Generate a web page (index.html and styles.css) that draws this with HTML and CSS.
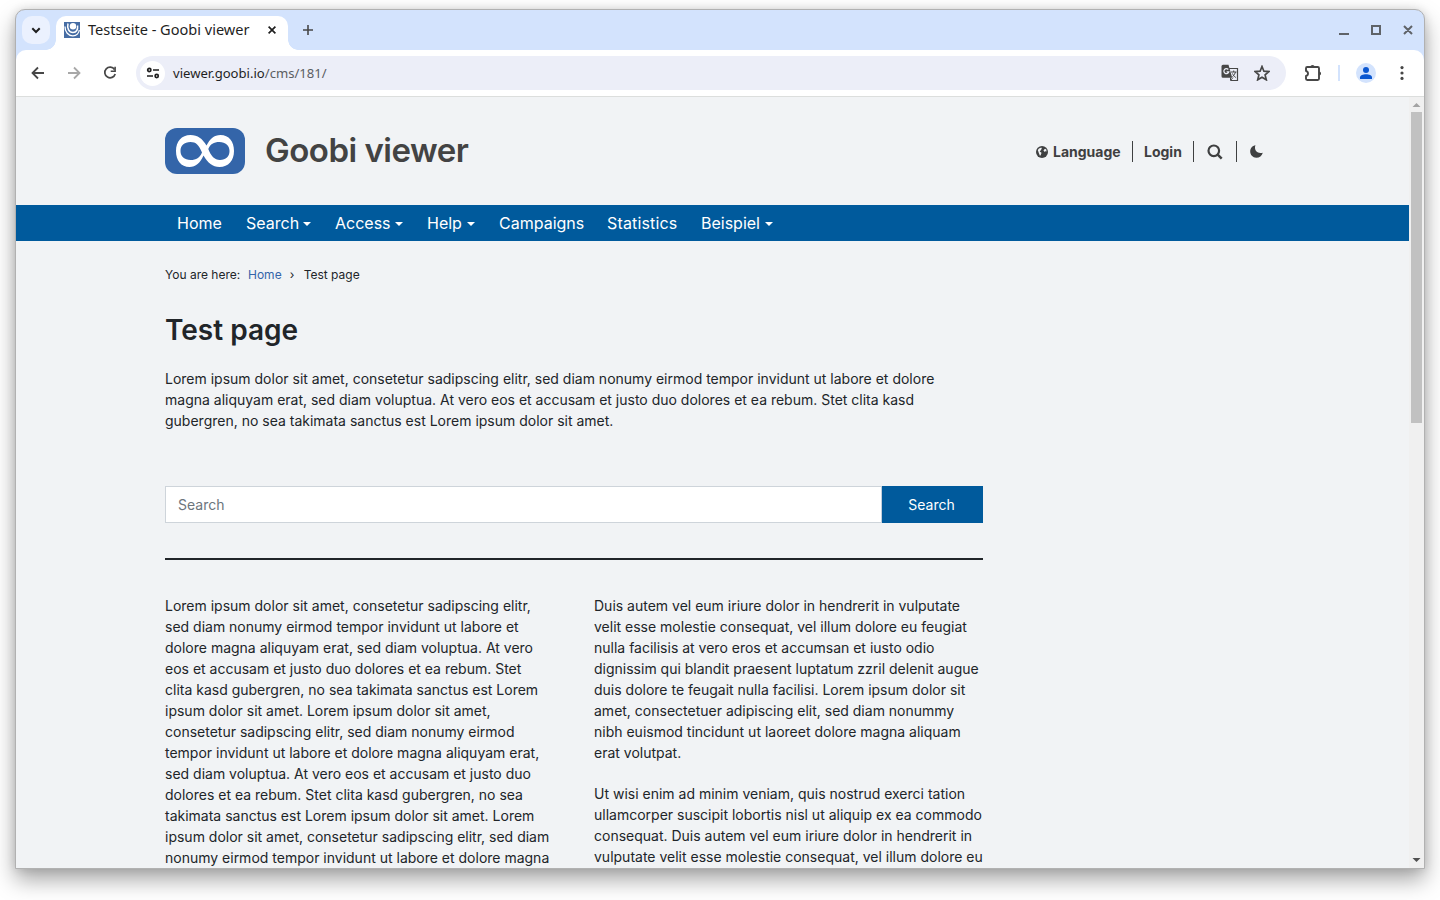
FILE: index.html
```html
<!DOCTYPE html>
<html lang="en">
<head>
<meta charset="utf-8">
<title>Testseite - Goobi viewer</title>
<link rel="stylesheet" href="styles.css">
</head>
<body>
<div class="window">
  <div class="tabstrip">
    <div class="tab-search"><svg width="28" height="28" viewBox="0 0 28 28"><path d="M10.300 12.300l3.700 3.700 3.700-3.700" fill="none" stroke="#1f1f1f" stroke-width="2"/></svg></div>
    <div class="tab">
      <svg class="favicon" width="16" height="16" viewBox="0 0 16 16"><rect width="16" height="16" fill="#466da4"/><circle cx="9" cy="4.300" r="3.200" fill="#fff"/><path d="M4 1.500C2.800 6.500 5 10.500 9 10.500C12.500 10.500 14 7.500 13.600 3.500" fill="none" stroke="#fff" stroke-width="1.500"/><path d="M1 4.500C.8 10 4.500 14 9 13.800C12.500 13.600 15 11 15.300 8" fill="none" stroke="#fff" stroke-width="1.300"/></svg>
      <span class="tab-title">Testseite - Goobi viewer</span>
      <svg class="tab-close" width="8" height="8" viewBox="0 0 8 8"><path d="M.6.6l6.800 6.800M7.400.6L.6 7.400" stroke="#1f1f1f" stroke-width="1.700"/></svg>
    </div>
    <svg class="new-tab" width="12" height="12" viewBox="0 0 12 12"><path d="M6 1v10M1 6h10" stroke="#474747" stroke-width="1.600"/></svg>
    <svg class="win-controls" width="80" height="20" viewBox="0 0 80 20"><g fill="none" stroke="#5f6368" stroke-width="2"><path d="M3 14h10M36 6h8v8h-8zM68 6l8 8M76 6l-8 8"/></g></svg>
  </div>
  <div class="toolbar">
    <div class="nav-icons">
      <svg width="16" height="16" viewBox="0 0 16 16"><path d="M14 8H3M8 2.500L2.500 8 8 13.500" fill="none" stroke="#474747" stroke-width="1.800"/></svg>
      <svg width="16" height="16" viewBox="0 0 16 16"><path d="M2 8h11M8 2.500L13.500 8 8 13.500" fill="none" stroke="#a8a8a8" stroke-width="1.800"/></svg>
      <svg width="16" height="16" viewBox="0 0 16 16"><path d="M12.500 4.500A5.300 5.300 0 1 0 13.200 9" fill="none" stroke="#474747" stroke-width="1.700"/><path d="M13.900 1.800v5.200H8.700V5.400h3.600V1.800z" fill="#474747"/></svg>
    </div>
    <div class="omnibox">
      <div class="site-info"><svg width="14" height="14" viewBox="0 0 14 14"><g fill="none" stroke="#1f1f1f" stroke-width="1.700"><circle cx="3.300" cy="4" r="1.600"/><path d="M7 4h6M1 10h6"/><circle cx="10.700" cy="10" r="1.600"/></g></svg></div>
      <span class="url">viewer.goobi.io<span class="path">/cms/181/</span></span>
      <svg class="translate" width="18" height="18" viewBox="0 0 18 18"><path d="M8 4.500h8.500v12H10" fill="none" stroke="#474747" stroke-width="1.200"/><path d="M2 .8h5.500l3.700 13H2A1.500 1.500 0 0 1 .5 12.300v-10A1.500 1.500 0 0 1 2 .8z" fill="#474747"/><path d="M7.300 5.500A2.500 2.500 0 1 0 7.800 7.800H5.600" fill="none" stroke="#eceef8" stroke-width="1.200"/><path d="M10 8h5.500M12.700 6.500V8M14.500 8c-.5 2-1.500 3.500-3 4.700M11.500 9.500c.8 1.800 1.700 3 3.300 4M9.500 13.500v3l2.500-3" fill="none" stroke="#474747"/></svg>
      <svg class="star" width="16" height="16" viewBox="0 0 16 16"><path d="M8 1.500l1.900 4.700 5 .4-3.800 3.300 1.200 4.900L8 12.200l-4.300 2.600 1.200-4.900L1.100 6.600l5-.4z" fill="none" stroke="#474747" stroke-width="1.700"/></svg>
    </div>
    <svg class="puzzle" width="18" height="18" viewBox="0 0 18 18"><path d="M2 4.200q0-1.200 1.200-1.200h10.600Q15 3 15 4.200v10.600Q15 16 13.800 16H3.200Q2 16 2 14.800V12q2-.4 2-2.500T2 7z" fill="none" stroke="#474747" stroke-width="1.900" stroke-linejoin="round"/><path d="M6.400 3a2.100 2.100 0 0 1 4.200 0zM15 7.400a2.100 2.100 0 0 1 0 4.200z" fill="#474747"/></svg>
    <div class="divider"></div>
    <svg class="avatar" width="20" height="20" viewBox="0 0 20 20"><circle cx="10" cy="10" r="10" fill="#d3e3fd"/><circle cx="10" cy="7" r="3" fill="#0b57d0"/><path d="M4 16v-1.500C4 12.500 7 11.300 10 11.300s6 1.200 6 3.200V16z" fill="#0b57d0"/></svg>
    <svg class="kebab" width="4" height="16" viewBox="0 0 4 16"><g fill="#474747"><circle cx="2" cy="2.600" r="1.600"/><circle cx="2" cy="8" r="1.600"/><circle cx="2" cy="13.400" r="1.600"/></g></svg>
  </div>
  <div class="viewport">
    <div class="page">
      <header class="header">
        <svg class="logo" width="80" height="46" viewBox="0 0 80 46"><rect width="80" height="46" rx="12" fill="#3465a9"/><path fill="#fff" fill-rule="evenodd" d="M41.500 17.500C45 11 49 7 55.500 7C64 7 69 13.500 69 23C69 32.500 63.500 39 54.500 39C47.500 39 43 35 38.500 27.500C35 35 31 39 24.500 39C16 39 11 32.500 11 23C11 13.500 16.500 7 25.500 7C33 7 37 10.500 41.500 17.500ZM37 24.500C34 17 31 14 25.500 14C19 14 15.500 17.500 15.500 23C15.500 28.500 19.500 32 25.500 32C31.500 32 34.500 30 37 24.500ZM43.300 21C46 28 49.500 32 55 32C61 32 64.500 28.500 64.500 23C64.500 17.500 60.500 14 54.500 14C48.500 14 45.500 16 43.300 21Z"/></svg>
        <div class="brand">Goobi viewer</div>
        <div class="actions">
          <span class="language"><svg width="12" height="12" viewBox="0 0 12 12"><circle cx="6" cy="6" r="6" fill="#3f4041"/><path d="M1.800 4L3 2.500 5.300 1.500 5.800 2.500 4.800 4.200 3.700 5.500l1.800 1.200L5 8.500 4 10 2.800 7zM7.500 4.200l1.500-1.500 1.300.8.200 2-1.500-.3L8.300 6z" fill="#f1f3f5"/></svg>Language</span>
          <span class="login">Login</span>
          <span class="search-icon"><svg width="16" height="16" viewBox="0 0 16 16"><circle cx="6.800" cy="6.800" r="5.300" fill="none" stroke="#3f4041" stroke-width="2.200"/><path d="M10.700 10.700l4 4" stroke="#3f4041" stroke-width="2.500"/></svg></span>
          <span class="moon"><svg width="13" height="13" viewBox="0 0 13 13"><path d="M5.500.3C3.700 4.300 6.700 9.200 12.800 7.700C12 10.800 9.500 12.700 6.300 12.700C2.700 12.700.2 9.800.2 6.500C.2 3.300 2.400.7 5.500.3z" fill="#3f4041"/></svg></span>
        </div>
      </header>
      <nav class="menu">
        <span class="m1">Home</span><span class="m2">Search<i></i></span><span class="m3">Access<i></i></span><span class="m4">Help<i></i></span><span class="m5">Campaigns</span><span class="m6">Statistics</span><span class="m7">Beispiel<i></i></span>
      </nav>
      <main class="content">
        <div class="crumbs"><span class="here">You are here:</span><a>Home</a><span class="sep">›</span><span>Test page</span></div>
        <h1>Test page</h1>
        <p class="intro">Lorem ipsum dolor sit amet, consetetur sadipscing elitr, sed diam nonumy eirmod tempor invidunt ut labore et dolore<br>magna aliquyam erat, sed diam voluptua. At vero eos et accusam et justo duo dolores et ea rebum. Stet clita kasd<br>gubergren, no sea takimata sanctus est Lorem ipsum dolor sit amet.</p>
        <div class="search-form"><div class="field">Search</div><div class="button">Search</div></div>
        <hr>
        <div class="columns">
          <div>
            <p>Lorem ipsum dolor sit amet, consetetur sadipscing elitr,<br>sed diam nonumy eirmod tempor invidunt ut labore et<br>dolore magna aliquyam erat, sed diam voluptua. At vero<br>eos et accusam et justo duo dolores et ea rebum. Stet<br>clita kasd gubergren, no sea takimata sanctus est Lorem<br>ipsum dolor sit amet. Lorem ipsum dolor sit amet,<br>consetetur sadipscing elitr, sed diam nonumy eirmod<br>tempor invidunt ut labore et dolore magna aliquyam erat,<br>sed diam voluptua. At vero eos et accusam et justo duo<br>dolores et ea rebum. Stet clita kasd gubergren, no sea<br>takimata sanctus est Lorem ipsum dolor sit amet. Lorem<br>ipsum dolor sit amet, consetetur sadipscing elitr, sed diam<br>nonumy eirmod tempor invidunt ut labore et dolore magna</p>
          </div>
          <div>
            <p>Duis autem vel eum iriure dolor in hendrerit in vulputate<br>velit esse molestie consequat, vel illum dolore eu feugiat<br>nulla facilisis at vero eros et accumsan et iusto odio<br>dignissim qui blandit praesent luptatum zzril delenit augue<br>duis dolore te feugait nulla facilisi. Lorem ipsum dolor sit<br>amet, consectetuer adipiscing elit, sed diam nonummy<br>nibh euismod tincidunt ut laoreet dolore magna aliquam<br>erat volutpat.</p>
            <p>Ut wisi enim ad minim veniam, quis nostrud exerci tation<br>ullamcorper suscipit lobortis nisl ut aliquip ex ea commodo<br>consequat. Duis autem vel eum iriure dolor in hendrerit in<br>vulputate velit esse molestie consequat, vel illum dolore eu</p>
          </div>
        </div>
      </main>
    </div>
    <div class="scrollbar">
      <svg width="15" height="15" viewBox="0 0 15 15"><path d="M7.500 6L11.500 10h-8z" fill="#a3a3a3"/></svg>
      <div class="thumb"></div>
      <svg class="down" width="15" height="15" viewBox="0 0 15 15"><path d="M7.500 9L11.500 5h-8z" fill="#505050"/></svg>
    </div>
  </div>
</div>
</body>
</html>
```
FILE: styles.css
```css
* { box-sizing: border-box; }
body { margin: 0; height: 900px; overflow: hidden; background: #fff; padding: 9px 15px; font: 14px/21px Inter, sans-serif; color: #212529; white-space: nowrap; }
svg { display: block; flex: none; }
.window { width: 1410px; height: 860px; border: 1px solid #b1b1b1; border-radius: 10px 10px 0 0; overflow: hidden; background: #d3e3fd; display: flex; flex-direction: column; box-shadow: 0 11px 22px rgba(0,0,0,.35), 0 0 10px rgba(0,0,0,.12); }
.tabstrip { height: 40px; flex: none; display: flex; padding: 6px 8px 0 6px; }
.tab-search { width: 28px; height: 28px; border-radius: 10px; background: #ebf1fe; }
.tab { position: relative; width: 232px; height: 34px; margin-left: 6px; padding: 0 12px 6px 8px; border-radius: 10px 10px 0 0; background: #fff; display: flex; align-items: center; }
.tab::before, .tab::after { content: ""; position: absolute; bottom: 0; width: 10px; height: 10px; }
.tab::before { left: -10px; background: radial-gradient(circle at 0 0, transparent 9.5px, #fff 10px); }
.tab::after { right: -10px; background: radial-gradient(circle at 100% 0, transparent 9.5px, #fff 10px); }
.tab-title { margin: 0 0 2px 8px; font: 14.55px/20px "Noto Sans", sans-serif; color: #1f1f1f; }
.tab-close { margin-left: auto; }
.new-tab { margin: 8px 0 0 14px; }
.win-controls { margin: 4px 0 0 auto; }
.toolbar { height: 47px; flex: none; background: #fff; border-bottom: 1px solid #dcdedd; border-radius: 10px 10px 0 0; display: flex; align-items: center; padding: 0 20px 0 14px; }
.nav-icons { display: flex; gap: 20px; }
.omnibox { width: 1150px; height: 34px; margin-left: 18px; padding: 0 16px 0 4px; border-radius: 17px; background: #eceef8; display: flex; align-items: center; }
.site-info { width: 25px; height: 25px; border-radius: 50%; background: #fff; display: flex; align-items: center; justify-content: center; }
.url { margin-left: 8px; font: 13.1px/20px "Noto Sans", sans-serif; color: #1f1f1f; }
.path { color: #5b5d62; }
.translate { margin-left: auto; }
.star { margin-left: 15px; }
.puzzle { margin-left: 18px; }
.divider { width: 2px; height: 16px; margin-left: 16px; background: #d3e3fd; }
.avatar { margin-left: 16px; }
.kebab { margin-left: 24px; }
.viewport { flex: 1; min-height: 0; display: flex; background: #f1f3f5; }
.page { width: 1393px; overflow: hidden; }
.header { height: 108px; padding: 31px 146px 0 149px; display: flex; align-items: flex-start; }
.brand { margin: 2px 0 0 20px; font-size: 33px; line-height: 40px; font-weight: 600; letter-spacing: -.5px; color: #434343; }
.actions { margin: 13px 0 0 auto; display: flex; height: 21px; font-weight: 700; color: #3f4041; }
.actions span { display: flex; align-items: center; }
.language { width: 96px; gap: 5px; }
.login { width: 61px; padding-left: 11px; border-left: 1px solid #3f4041; }
.search-icon { width: 43px; padding-left: 13px; border-left: 1px solid #3f4041; }
.moon { width: 27px; padding-left: 13px; border-left: 1px solid #3f4041; }
.menu { height: 36px; padding-left: 161px; background: #005a9c; color: #fff; font-size: 16px; line-height: 36px; display: flex; }
.menu span { display: flex; align-items: center; }
.m1 { width: 69px; } .m2 { width: 89px; } .m3 { width: 92px; } .m4 { width: 72px; } .m5 { width: 108px; } .m6 { width: 94px; letter-spacing: .15px; }
.menu i { margin: 1px 0 0 4px; border: 4px solid transparent; border-top-color: #fff; border-bottom: 0; }
.menu .m4 i, .menu .m7 i { margin-left: 5px; }
.content { width: 967px; padding: 24px 0 0 149px; }
.crumbs { display: flex; font-size: 12px; line-height: 20px; }
.here { width: 75px; }
.crumbs a { margin-left: 8px; color: #3465a9; }
.sep { width: 14px; margin-left: 8px; }
h1 { margin: 26px 0 0; font-size: 28px; line-height: 38px; font-weight: 600; }
p { margin: 0 0 20px; }
.intro { margin: 19px 0 0; }
.search-form { display: flex; margin-top: 55px; height: 37px; }
.field { width: 717px; border: 1px solid #ced4da; border-right-color: #c3cedb; background: #fff; padding: 7px 12px; color: #6c757d; }
.button { width: 101px; background: #005a9c; color: #fff; text-align: center; line-height: 37px; padding-right: 2px; }
hr { height: 2px; border: 0; background: #212529; margin: 35px 0 35px; }
.columns { display: grid; grid-template-columns: 389px 389px; gap: 40px; }
.scrollbar { width: 15px; background: #f0f0f0; display: flex; flex-direction: column; }
.thumb { width: 11px; height: 311px; margin-left: 2px; background: #c1c1c1; }
.down { margin-top: auto; }
```
